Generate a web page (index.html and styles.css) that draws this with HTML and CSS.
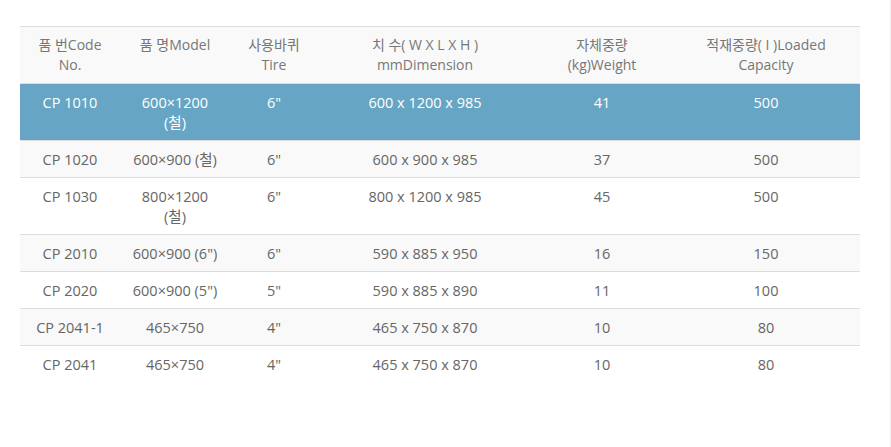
FILE: index.html
```html
<!DOCTYPE html>
<html lang="ko">
<head>
<meta charset="utf-8">
<title>Spec table</title>
<link rel="stylesheet" href="styles.css">
</head>
<body>
<div class="page">
  <table class="spec">
    <colgroup>
      <col class="c1"><col class="c2"><col class="c3"><col class="c4"><col class="c5"><col class="c6">
    </colgroup>
    <thead>
      <tr>
        <th>품 번Code<br>No.</th>
        <th>품 명Model</th>
        <th>사용바퀴<br>Tire</th>
        <th>치 수( W X L X H )<br>mmDimension</th>
        <th>자체중량<br>(kg)Weight</th>
        <th>적재중량( I )Loaded<br>Capacity</th>
      </tr>
    </thead>
    <tbody>
      <tr class="active">
        <td>CP 1010</td><td>600×1200<br>(철)</td><td>6"</td><td>600 x 1200 x 985</td><td>41</td><td>500</td>
      </tr>
      <tr class="odd">
        <td>CP 1020</td><td>600×900 (철)</td><td>6"</td><td>600 x 900 x 985</td><td>37</td><td>500</td>
      </tr>
      <tr>
        <td>CP 1030</td><td>800×1200<br>(철)</td><td>6"</td><td>800 x 1200 x 985</td><td>45</td><td>500</td>
      </tr>
      <tr class="odd">
        <td>CP 2010</td><td>600×900 (6")</td><td>6"</td><td>590 x 885 x 950</td><td>16</td><td>150</td>
      </tr>
      <tr>
        <td>CP 2020</td><td>600×900 (5")</td><td>5"</td><td>590 x 885 x 890</td><td>11</td><td>100</td>
      </tr>
      <tr class="odd">
        <td>CP 2041-1</td><td>465×750</td><td>4"</td><td>465 x 750 x 870</td><td>10</td><td>80</td>
      </tr>
      <tr>
        <td>CP 2041</td><td>465×750</td><td>4"</td><td>465 x 750 x 870</td><td>10</td><td>80</td>
      </tr>
    </tbody>
  </table>
</div>
</body>
</html>
```

FILE: styles.css
```css
html, body {
  margin: 0;
  padding: 0;
  background: #fff;
}
body {
  box-sizing: border-box;
  min-height: 447px;
  border-right: 1px solid #f0f0f0;
  font-family: "Open Sans", "Noto Sans CJK KR", sans-serif;
  font-size: 14px;
  line-height: 20px;
  color: #666;
}
.page {
  padding: 26px 0 0 20px;
}
.spec {
  width: 840px;
  border-collapse: collapse;
  table-layout: fixed;
  border-top: 1px solid #ddd;
}
.c1 { width: 100px; }
.c2 { width: 110px; }
.c3 { width: 88px; }
.c4 { width: 214px; }
.c5 { width: 140px; }
.c6 { width: 188px; }
.spec th,
.spec td {
  padding: 8px 2px;
  text-align: center;
  vertical-align: top;
  white-space: nowrap;
  font-weight: normal;
}
.spec td {
  font-size: 14.5px;
  padding: 9px 2px 7px;
}
.spec thead tr {
  background: #f9f9f9;
}
.spec th {
  color: #777;
  border-bottom: 1px solid #ddd;
}
.spec tbody tr + tr td {
  border-top: 1px solid #ddd;
}
.spec tbody tr.odd {
  background: #f9f9f9;
}
.spec tbody tr.active {
  background: #67a5c4;
}
.spec tbody tr.active td {
  color: #fff;
}
```
